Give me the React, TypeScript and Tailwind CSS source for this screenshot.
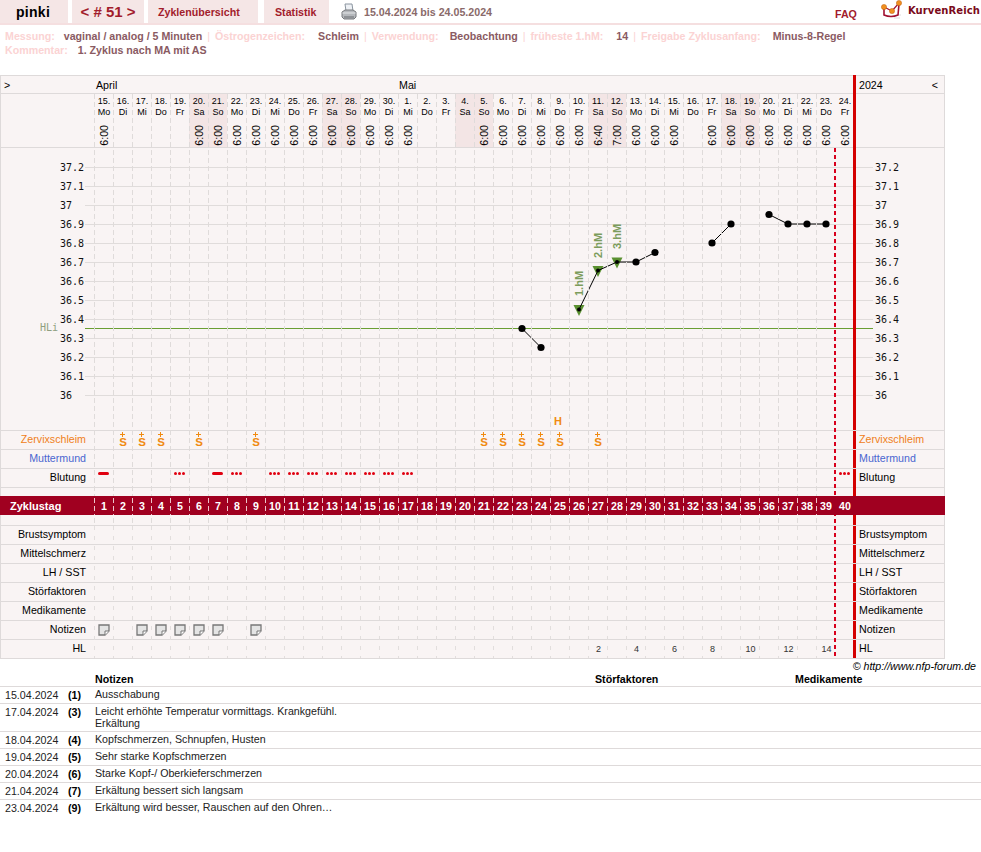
import React from 'react';

const COL = 19;
const days = Array.from({ length: 40 }, (_, i) => i + 1);

const dates = [
  ['15.', 'Mo'], ['16.', 'Di'], ['17.', 'Mi'], ['18.', 'Do'], ['19.', 'Fr'], ['20.', 'Sa'], ['21.', 'So'],
  ['22.', 'Mo'], ['23.', 'Di'], ['24.', 'Mi'], ['25.', 'Do'], ['26.', 'Fr'], ['27.', 'Sa'], ['28.', 'So'],
  ['29.', 'Mo'], ['30.', 'Di'], ['1.', 'Mi'], ['2.', 'Do'], ['3.', 'Fr'], ['4.', 'Sa'], ['5.', 'So'],
  ['6.', 'Mo'], ['7.', 'Di'], ['8.', 'Mi'], ['9.', 'Do'], ['10.', 'Fr'], ['11.', 'Sa'], ['12.', 'So'],
  ['13.', 'Mo'], ['14.', 'Di'], ['15.', 'Mi'], ['16.', 'Do'], ['17.', 'Fr'], ['18.', 'Sa'], ['19.', 'So'],
  ['20.', 'Mo'], ['21.', 'Di'], ['22.', 'Mi'], ['23.', 'Do'], ['24.', 'Fr'],
];

const noTime = [2, 3, 4, 5, 18, 19, 20, 32];
const times: Record<number, string> = { 27: '6:40', 28: '7:00' };

const scale = ['37.2', '37.1', '37', '36.9', '36.8', '36.7', '36.6', '36.5', '36.4', '36.3', '36.2', '36.1', '36'];

// temperature segments, gaps in the curve split them
const curves: [number, number][][] = [
  [[23, 36.35], [24, 36.25]],
  [[26, 36.45], [27, 36.655], [28, 36.7], [29, 36.7], [30, 36.75]],
  [[33, 36.8], [34, 36.9]],
  [[36, 36.95], [37, 36.9], [38, 36.9], [39, 36.9]],
];
const marks: [number, number, string, number][] = [
  [26, 36.45, '1.hM', 296],
  [27, 36.655, '2.hM', 258],
  [28, 36.7, '3.hM', 249],
];

const schleim = [2, 3, 4, 6, 9, 21, 22, 23, 24, 25, 27];
const heavy = [1, 7];
const spots = [5, 8, 10, 11, 12, 13, 14, 15, 16, 17, 40];
const noted = [1, 3, 4, 5, 6, 7, 9];

const notes = [
  ['15.04.2024', '(1)', ['Ausschabung']],
  ['17.04.2024', '(3)', ['Leicht erhöhte Temperatur vormittags. Krankgefühl.', 'Erkältung']],
  ['18.04.2024', '(4)', ['Kopfschmerzen, Schnupfen, Husten']],
  ['19.04.2024', '(5)', ['Sehr starke Kopfschmerzen']],
  ['20.04.2024', '(6)', ['Starke Kopf-/ Oberkieferschmerzen']],
  ['21.04.2024', '(7)', ['Erkältung bessert sich langsam']],
  ['23.04.2024', '(9)', ['Erkältung wird besser, Rauschen auf den Ohren…']],
] as [string, string, string[]][];

const dayX = (d: number) => 94 + COL * (d - 1) + 10;
const tempY = (t: number) => 19 + (37.2 - t) * 190;

function Printer() {
  return (
    <svg width="16" height="18" viewBox="0 0 16 18" className="shrink-0">
      <path d="M4 1 L11 1 L12 8 L5 8 Z" fill="#eef1f5" stroke="#8b95a0" strokeWidth="1" />
      <path d="M1 9 L4 7 L12 7 L15 9 L15 14 L13 16 L3 16 L1 14 Z" fill="#b5b8bc" stroke="#77797c" strokeWidth="1" />
      <path d="M1.5 10 L14.5 10" stroke="#e4e6e8" strokeWidth="1" />
      <path d="M3 13 L13 13 L13 16 L3 16 Z" fill="#8e9195" />
    </svg>
  );
}

function Logo() {
  return (
    <svg width="22" height="20" viewBox="0 0 22 20" className="shrink-0">
      <path d="M16 15 L20 15 M13 18 L19 18" stroke="#ddd" strokeWidth="1" />
      <path d="M3 8 L3 15 Q10 18 17 15 L18 4" fill="none" stroke="#a01030" strokeWidth="1.6" />
      <path d="M3 7 L11 11 L18 3" fill="none" stroke="#a01030" strokeWidth="1.2" />
      <circle cx="3" cy="7" r="2.6" fill="#f09020" stroke="#c06010" strokeWidth="0.5" />
      <circle cx="11" cy="11" r="2.6" fill="#f09020" stroke="#c06010" strokeWidth="0.5" />
      <circle cx="18" cy="3" r="2.6" fill="#f09020" stroke="#c06010" strokeWidth="0.5" />
    </svg>
  );
}

function NoteIcon() {
  return (
    <svg width="12" height="12" viewBox="0 0 12 12">
      <path d="M1 1 L11 1 L11 7 L7 11 L1 11 Z" fill="#e4e4e4" stroke="#777" strokeWidth="1.3" />
      <path d="M7 11 L7 7 L11 7" fill="#fff" stroke="#777" strokeWidth="1" />
    </svg>
  );
}

function Row({ label, labelClass = 'text-black', children }: { label: string; labelClass?: string; children?: (d: number) => React.ReactNode }) {
  return (
    <div className="flex h-[19px] border-b border-[#dedada]">
      <div className={`w-[93px] shrink-0 pr-[8px] pt-[2px] text-right ${labelClass}`}>{label}</div>
      {days.map((d) => (
        <div key={d} className="flex w-[19px] shrink-0 flex-col items-center">
          {children ? children(d) : null}
        </div>
      ))}
      <div className={`pl-[5px] pt-[2px] ${labelClass}`}>{label}</div>
    </div>
  );
}

function Plot() {
  return (
    <svg width="945" height="282" className="-ml-px block">
      {scale.map((s, i) => {
        const y = 19.5 + i * 19;
        return (
          <g key={s}>
            <line x1="85" x2="873" y1={y} y2={y} stroke="#e0dcdb" />
            <text x="60" y={y + 3.5} className="font-['DejaVu_Sans_Mono'] text-[10px]" fill="#111">{s}</text>
            <text x="875" y={y + 3.5} className="font-['DejaVu_Sans_Mono'] text-[10px]" fill="#111">{s}</text>
          </g>
        );
      })}
      <text x="40" y="183" className="font-['DejaVu_Sans_Mono'] text-[10px]" fill="#8f9f80">HLi</text>
      <line x1="85" x2="873" y1="180.5" y2="180.5" stroke="#6a9e32" />
      {marks.map(([d, t, label, end]) => (
        <g key={label}>
          <path d={`M${dayX(d) - 5.5} ${tempY(t) - 4.5} L${dayX(d) + 5.5} ${tempY(t) - 4.5} L${dayX(d)} ${tempY(t) + 6.5} Z`} fill="#5a9030" />
          <text
            transform={`translate(${dayX(d) + 3.5} ${end - 148}) rotate(-90)`}
            className="text-[11px] font-bold"
            fill="#7c9c5c"
          >
            {label}
          </text>
        </g>
      ))}
      {curves.map((c, i) => (
        <g key={i}>
          <polyline points={c.map(([d, t]) => `${dayX(d)},${tempY(t)}`).join(' ')} fill="none" stroke="#000" strokeWidth="1" />
          {c.map(([d, t]) => (
            <circle key={d} cx={dayX(d)} cy={tempY(t)} r={marks.some((m) => m[0] === d) ? 2 : 3.6} fill="#000" />
          ))}
        </g>
      ))}
      <text x="554" y="277" className="text-[11px] font-bold" fill="#f08a10">H</text>
    </svg>
  );
}

// dashes and the two red lines run through all rows of the chart
function Overlay() {
  const redParts = [[0, 355], [356, 374], [375, 393], [394, 450], [451, 469], [470, 488], [489, 507], [508, 526], [527, 545], [546, 564], [565, 583]];
  return (
    <svg width="945" height="584" className="pointer-events-none absolute left-[-1px] top-[-1px]">
      {days.slice(0, 39).map((d) => {
        const x = 94.5 + COL * (d - 1);
        return (
          <g key={d}>
            <line x1={x} x2={x} y1="19" y2="451" stroke="#dfdbda" strokeDasharray="5 3" />
            <line x1={x} x2={x} y1="451" y2="583" stroke="#e2dedd" strokeDasharray="4 6" />
          </g>
        );
      })}
      <line x1="835" x2="835" y1="73" y2="581" stroke="#d8001c" strokeWidth="2" strokeDasharray="4 3" />
      {redParts.map(([a, b]) => (
        <rect key={a} x="853" y={a} width="3" height={b - a} fill="#d40000" />
      ))}
    </svg>
  );
}

function Info({ label, value, gap, first = false }: { label: string; value: string; gap: number; first?: boolean }) {
  return (
    <>
      {!first && <span className="mx-[5px] font-normal text-[#fbd3d3]">|</span>}
      <span className="text-[#fbd3d3]">{label}</span>
      <span className="text-[#8a5a62]" style={{ marginLeft: gap }}>{value}</span>
    </>
  );
}

export default function App() {
  return (
    <div className="h-[852px] w-[981px] overflow-hidden bg-white font-['Liberation_Sans',Arial,sans-serif] text-[10.67px] leading-[12px] text-black">
      <div className="flex h-[25px] items-start border-b-2 border-[#f5dfe0]">
        <div className="flex h-[23px] w-[68px] items-center justify-center bg-[#f5e6e6] pr-[2px] text-[14px] font-bold tracking-[0.3px]">pinki</div>
        <div className="ml-[4px] flex h-[23px] w-[72px] items-center justify-center bg-[#f5e6e6] text-[15px] font-bold text-[#a21c2c]">{'< # 51 >'}</div>
        <div className="ml-[4px] flex h-[23px] w-[110px] items-center bg-[#f5e6e6] pl-[10px] font-bold text-[#a21c2c]">Zyklenübersicht</div>
        <div className="ml-[6px] flex h-[23px] w-[65px] items-center bg-[#f5e6e6] pl-[11px] font-bold text-[#a21c2c]">Statistik</div>
        <div className="ml-[12px] mt-[3px]"><Printer /></div>
        <div className="ml-[7px] mt-[6px] font-bold text-[#8a6a6a]">15.04.2024 bis 24.05.2024</div>
        <div className="ml-auto mt-[8px] font-bold text-[#a21c2c]">FAQ</div>
        <div className="ml-[24px]"><Logo /></div>
        <div className="ml-[5px] mr-[1px] mt-[5px] font-['DejaVu_Sans'] text-[10px] font-bold tracking-[0.1px] text-[#7a0a1a]">KurvenReich</div>
      </div>

      <div className="h-[50px] pl-[5px] pt-[4px] font-bold leading-[14px]">
        <div className="flex">
          <Info first gap={9} label="Messung:" value="vaginal / analog / 5 Minuten" />
          <Info gap={13} label="Östrogenzeichen:" value="Schleim" />
          <Info gap={11} label="Verwendung:" value="Beobachtung" />
          <Info gap={13} label="früheste 1.hM:" value="14" />
          <Info gap={12} label="Freigabe Zyklusanfang:" value="Minus-8-Regel" />
        </div>
        <div className="flex">
          <Info first gap={10} label="Kommentar:" value="1. Zyklus nach MA mit AS" />
        </div>
      </div>

      <div className="relative w-[945px] border-r border-l border-t border-[#dedada] bg-[#f9f4f4]">
        <div className="flex h-[18px] items-center justify-between border-b border-[#dedada]">
          <div className="flex">
            <span className="w-[94px] pl-[3px]">&gt;</span>
            <span className="w-[304px] pl-[1px]">April</span>
            <span>Mai</span>
          </div>
          <div className="flex w-[88px] justify-between pl-[3px] pr-[6px]">
            <span>2024</span>
            <span>&lt;</span>
          </div>
        </div>

        <div className="flex h-[54px] border-b border-[#dedada] pl-[93px]">
          {dates.map(([day, name], i) => {
            const d = i + 1;
            const weekend = name === 'Sa' || name === 'So';
            return (
              <div key={d} className={`flex w-[19px] shrink-0 flex-col items-center pl-[1px] pt-[2px] text-[9px] leading-[11px] ${weekend ? 'bg-[#f3e5e5]' : ''}`}>
                <span>{day}</span>
                <span>{name}</span>
                {!noTime.includes(d) && (
                  <span className="mt-[7px] rotate-180 text-[10.67px] leading-[12px] [writing-mode:vertical-rl]">{times[d] ?? '6:00'}</span>
                )}
              </div>
            );
          })}
        </div>

        <div className="h-[283px] border-b border-[#dedada]">
          <Plot />
        </div>

        <Row label="Zervixschleim" labelClass="text-[#f08020]">
          {(d) =>
            schleim.includes(d) && (
              <div className="flex flex-col items-center pl-[1px] pt-[1px] text-[#f08a10]">
                <svg width="5" height="5" viewBox="0 0 5 5" className="block">
                  <path d="M0 2.5 L5 2.5 M2.5 0 L2.5 5" stroke="#f08a10" strokeWidth="1" />
                </svg>
                <span className="text-[11.5px] font-bold leading-[10px]">S</span>
              </div>
            )
          }
        </Row>
        <Row label="Muttermund" labelClass="text-[#4a66d0]" />
        <Row label="Blutung">
          {(d) => (
            <>
              {heavy.includes(d) && <div className="mt-[3px] h-[3px] w-[11px] rounded-full bg-[#e00010]" />}
              {spots.includes(d) && (
                <div className="mt-[3px] flex gap-[1px]">
                  <span className="size-[3px] rounded-full bg-[#e00010]" />
                  <span className="size-[3px] rounded-full bg-[#e00010]" />
                  <span className="size-[3px] rounded-full bg-[#e00010]" />
                </div>
              )}
            </>
          )}
        </Row>

        <div className="h-[38px] border-b border-[#dedada] pt-[8px]">
          <div className="relative z-10 -mx-px flex h-[19px] items-center bg-[#a00020] font-bold text-white">
            <div className="w-[94px] shrink-0 pl-[10px] text-[11px]">Zyklustag</div>
            {days.map((d) => (
              <div key={d} className="w-[19px] shrink-0 pl-[1px] text-center">{d}</div>
            ))}
            <svg width="945" height="19" className="pointer-events-none absolute left-0 top-0">
              {days.slice(0, 39).map((d) => (
                <line key={d} x1={94.5 + COL * (d - 1)} x2={94.5 + COL * (d - 1)} y1="2" y2="19" stroke="#edc4ca" strokeDasharray="5 3" />
              ))}
            </svg>
          </div>
        </div>

        <Row label="Brustsymptom" />
        <Row label="Mittelschmerz" />
        <Row label="LH / SST" />
        <Row label="Störfaktoren" />
        <Row label="Medikamente" />
        <Row label="Notizen">
          {(d) => noted.includes(d) && <div className="mt-[3px]"><NoteIcon /></div>}
        </Row>
        <Row label="HL">
          {(d) => d > 26 && d % 2 === 1 && <span className="pl-[2px] pt-[3px] text-[9px] leading-[12px] text-[#333]">{d - 25}</span>}
        </Row>

        <Overlay />
      </div>

      <div className="mt-[1px] h-[13px] pr-[5px] text-right italic leading-[13px]">© http://www.nfp-forum.de</div>

      <div className="flex h-[14px] border-b border-[#dedada] font-bold">
        <div className="w-[95px] shrink-0" />
        <div className="w-[500px] shrink-0">Notizen</div>
        <div className="w-[200px] shrink-0">Störfaktoren</div>
        <div>Medikamente</div>
      </div>
      {notes.map(([date, nr, lines], i) => (
        <div key={date} className={`flex pb-[2px] pt-[2px] ${i < notes.length - 1 ? 'border-b border-[#dedada]' : ''}`}>
          <div className="w-[68px] shrink-0 pl-[5px] text-[#222]">{date}</div>
          <div className="w-[27px] shrink-0 font-bold">{nr}</div>
          <div className="leading-[11.5px] text-[#222]">
            {lines.map((l) => (
              <div key={l}>{l}</div>
            ))}
          </div>
        </div>
      ))}
    </div>
  );
}
